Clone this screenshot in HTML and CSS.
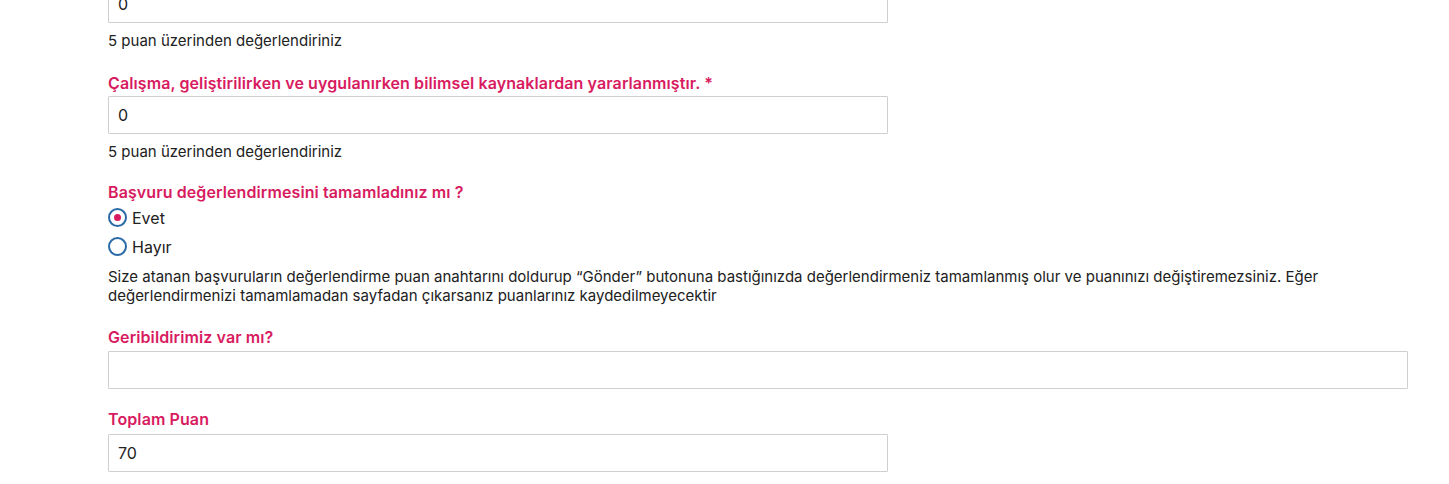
FILE: index.html
```html
<!DOCTYPE html>
<html lang="tr">
<head>
<meta charset="utf-8">
<title>Değerlendirme</title>
<link rel="stylesheet" href="styles.css">
</head>
<body>
<form class="form">
  <div class="group first">
    <input class="field short" type="text" value="0">
    <p class="help">5 puan üzerinden değerlendiriniz</p>
  </div>
  <div class="group">
    <label class="label">Çalışma, geliştirilirken ve uygulanırken bilimsel kaynaklardan yararlanmıştır. *</label>
    <input class="field short" type="text" value="0">
    <p class="help">5 puan üzerinden değerlendiriniz</p>
  </div>
  <div class="group choice">
    <label class="label">Başvuru değerlendirmesini tamamladınız mı ?</label>
    <div class="radios">
      <div class="radio-row"><span class="radio checked"></span><span class="radio-text">Evet</span></div>
      <div class="radio-row"><span class="radio"></span><span class="radio-text">Hayır</span></div>
    </div>
    <p class="note">Size atanan başvuruların değerlendirme puan anahtarını doldurup “Gönder” butonuna bastığınızda değerlendirmeniz tamamlanmış olur ve puanınızı değiştiremezsiniz. Eğer değerlendirmenizi tamamlamadan sayfadan çıkarsanız puanlarınız kaydedilmeyecektir</p>
  </div>
  <div class="group feedback">
    <label class="label">Geribildirimiz var mı?</label>
    <input class="field wide" type="text" value="">
  </div>
  <div class="group total">
    <label class="label">Toplam Puan</label>
    <input class="field short" type="text" value="70">
  </div>
</form>
</body>
</html>
```

FILE: styles.css
```css
* { box-sizing: border-box; }
html, body {
  margin: 0;
  padding: 0;
  background: #ffffff;
  overflow: hidden;
}
body {
  font-family: Inter, "Noto Sans", "Liberation Sans", sans-serif;
  font-size: 15px;
  color: #212121;
}
.form {
  padding-left: 108px;
  display: flex;
  flex-direction: column;
}
.group {
  display: flex;
  flex-direction: column;
  align-items: flex-start;
  margin-bottom: 20px;
}
.group.first { margin-top: -15px; margin-bottom: 22px; }
.group.choice { margin-bottom: 22px; }
.group.feedback { margin-bottom: 20px; }
.label {
  font-size: 16px;
  font-weight: 600;
  line-height: 20px;
  letter-spacing: 0.1px;
  color: #d81b60;
  margin-bottom: 3px;
}
.group.feedback .label { margin-bottom: 4px; }
.group.total .label { margin-bottom: 5px; }
.field {
  height: 38px;
  border: 1px solid #cfcfcf;
  border-radius: 1px;
  padding: 0 9px;
  font-family: inherit;
  font-size: 16px;
  color: #222;
  background: #fff;
  outline: none;
}
.field.short { width: 780px; }
.field.wide { width: 1300px; }
.help {
  margin: 8px 0 0;
  line-height: 20px;
}
.radios {
  display: flex;
  flex-direction: column;
  margin-top: -2px;
}
.radio-row {
  display: flex;
  align-items: center;
  height: 29px;
  gap: 5px;
}
.radio {
  width: 19px;
  height: 19px;
  border: 2px solid #2a6aa6;
  border-radius: 50%;
  display: flex;
  align-items: center;
  justify-content: center;
}
.radio.checked::after {
  content: "";
  width: 7px;
  height: 7px;
  border-radius: 50%;
  background: #d81b60;
}
.radio-text {
  font-size: 16px;
}
.note {
  margin: 6px 0 0;
  line-height: 19px;
  max-width: 1300px;
}
```
